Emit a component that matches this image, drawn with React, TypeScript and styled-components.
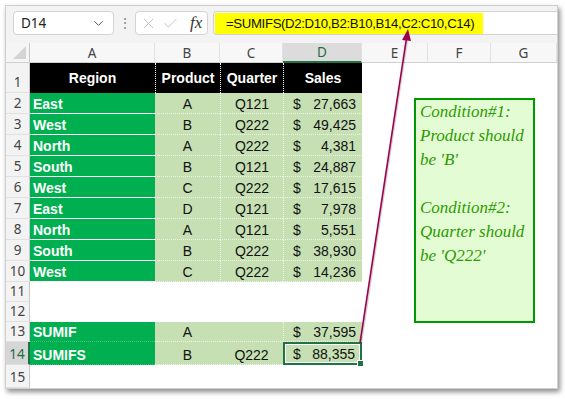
import React from "react";
import styled, { createGlobalStyle } from "styled-components";
import { ChevronDown, X, Check } from "lucide-react";

const GlobalStyle = createGlobalStyle`
  html, body {
    margin: 0;
    padding: 0;
    background: #fff;
  }
  body {
    width: 565px;
    height: 399px;
    overflow: hidden;
    font-family: "Liberation Sans", Arial, sans-serif;
  }
`;

const Page = styled.div`
  position: relative;
  width: 565px;
  height: 399px;
  padding: 5px 0 0 5px;
  box-sizing: border-box;
`;

const Window = styled.div`
  width: 553px;
  height: 384px;
  box-sizing: border-box;
  border: 1px solid #cfcfcf;
  background: #fff;
  box-shadow: 2px 3px 5px rgba(0, 0, 0, 0.45);
  display: flex;
  flex-direction: column;
  overflow: hidden;
`;

/* ---------- formula bar ---------- */

const Toolbar = styled.div`
  height: 37px;
  flex-shrink: 0;
  box-sizing: border-box;
  padding: 5px 0 0 7px;
  background: #f3f3f3;
  display: flex;
  align-items: flex-start;
`;

const RoundBox = styled.div`
  height: 24px;
  box-sizing: border-box;
  border: 1px solid #d3d3d3;
  border-radius: 4px;
  background: #fff;
  display: flex;
  align-items: center;
`;

const NameBox = styled(RoundBox)`
  width: 101px;
  justify-content: space-between;
  padding: 0 7px 0 7px;
  font-family: "Noto Sans", "Open Sans", sans-serif;
  font-size: 13.5px;
  color: #222;
`;

const Dots = styled.span`
  width: 21px;
  text-align: center;
  line-height: 24px;
  font-size: 14px;
  color: #8a8a8a;
`;

const FxBox = styled(RoundBox)`
  width: 73px;
  padding: 0 4px 0 4px;
  gap: 5px;
`;

const Fx = styled.span`
  margin-left: 6px;
  font-family: "Liberation Serif", "Times New Roman", serif;
  font-style: italic;
  font-size: 17px;
  color: #333;
`;

const FormulaBox = styled(RoundBox)`
  flex: 1;
  margin-left: 5px;
  border-right: none;
  border-radius: 4px 0 0 4px;
  padding-left: 1px;
`;

const Highlight = styled.div`
  width: 268px;
  height: 21px;
  box-sizing: border-box;
  padding-left: 11px;
  background: #ffff00;
  font-size: 13.2px;
  letter-spacing: -0.35px;
  line-height: 21px;
  color: #111;
  white-space: nowrap;
`;

/* ---------- sheet ---------- */

const Sheet = styled.div`
  flex: 1;
  display: grid;
  grid-template-columns: 24px 125px 65px 63px 79px 66px 63px 1fr;
  grid-template-rows: 20px 30px repeat(9, 21px) 20px 20px 20px 23px 1fr;
`;

const Corner = styled.div`
  background: #f5f5f5;
  border-right: 1px solid #c8c8c8;
  border-bottom: 1px solid #d0d0d0;
  box-sizing: border-box;
  position: relative;
  &::after {
    content: "";
    position: absolute;
    right: 3px;
    bottom: 3px;
    width: 13px;
    height: 13px;
    background: #d4d4d4;
    clip-path: polygon(100% 0, 100% 100%, 0 100%);
  }
`;

const ColHead = styled.div<{ $active?: boolean }>`
  box-sizing: border-box;
  display: flex;
  align-items: center;
  justify-content: center;
  font-family: "Noto Sans", "Open Sans", sans-serif;
  font-size: 13.5px;
  color: ${({ $active }) => ($active ? "#1e6e42" : "#444")};
  background: ${({ $active }) => ($active ? "#dcdcdc" : "#f7f7f7")};
  border-right: 1px solid #e2e2e2;
  border-bottom: ${({ $active }) =>
    $active ? "2px solid #217346" : "1px solid #d0d0d0"};
`;

const RowHead = styled.div<{ $active?: boolean }>`
  box-sizing: border-box;
  display: flex;
  align-items: flex-end;
  justify-content: center;
  padding-bottom: 2px;
  font-family: "Noto Sans", "Open Sans", sans-serif;
  font-size: 13.5px;
  line-height: 16px;
  color: ${({ $active }) => ($active ? "#1e6e42" : "#444")};
  background: ${({ $active }) => ($active ? "#d6d6d6" : "#f3f3f3")};
  border-bottom: 1px solid #e1e1e1;
  border-right: ${({ $active }) =>
    $active ? "2px solid #217346" : "1px solid #c8c8c8"};
`;

type Kind = "title" | "region" | "light" | "blank";

const Cell = styled.div<{
  $kind: Kind;
  $align?: "left" | "center";
  $sep?: boolean;
  $flat?: boolean;
}>`
  box-sizing: border-box;
  display: flex;
  align-items: ${({ $kind }) => ($kind === "title" ? "center" : "flex-end")};
  justify-content: ${({ $align }) =>
    $align === "left" ? "flex-start" : "center"};
  padding: 0 3px;
  font-size: 14px;
  line-height: 17px;
  white-space: nowrap;
  font-weight: ${({ $kind }) =>
    $kind === "title" || $kind === "region" ? "bold" : "normal"};
  color: ${({ $kind }) =>
    $kind === "title" || $kind === "region" ? "#fff" : "#111"};
  background: ${({ $kind }) =>
    $kind === "title"
      ? "#000"
      : $kind === "region"
      ? "#00b050"
      : $kind === "light"
      ? "#c6e0b4"
      : "#fff"};
  border-left: ${({ $sep, $kind }) =>
    !$sep
      ? "none"
      : $kind === "title"
      ? "1px dotted #fff"
      : "1px dotted #eef6e8"};
  border-bottom: ${({ $kind, $flat }) =>
    $kind === "blank" || $kind === "title"
      ? "none"
      : $flat
      ? "1px dotted #3fc479"
      : $kind === "region"
      ? "1px solid #fff"
      : "1px dotted #eef6e8"};
`;

const Money = styled(Cell)`
  justify-content: space-between;
  padding: 0 6px 0 9px;
`;

const Selected = styled(Money)`
  position: relative;
  border: 2px solid #217346;
  box-shadow: inset 0 0 0 1px #fff;
  padding: 0 5px 0 8px;
  &::after {
    content: "";
    position: absolute;
    right: -4px;
    bottom: -4px;
    width: 5px;
    height: 5px;
    background: #217346;
    border: 1px solid #fff;
    z-index: 2;
  }
`;

/* ---------- overlays ---------- */

const Note = styled.div`
  position: absolute;
  left: 414px;
  top: 98px;
  width: 121px;
  height: 225px;
  box-sizing: border-box;
  border: 2px solid #009a00;
  background: #e4fcd3;
  padding: 0 0 0 4px;
  font-family: "Liberation Serif", "Times New Roman", serif;
  font-style: italic;
  font-size: 17px;
  line-height: 24px;
  color: #2b9a00;
`;

const Line = styled.div`
  min-height: 24px;
  white-space: nowrap;
`;

const ArrowLayer = styled.svg`
  position: absolute;
  left: 0;
  top: 0;
  pointer-events: none;
`;

const columns = ["A", "B", "C", "D", "E", "F", "G"];

const data = [
  ["East", "A", "Q121", "27,663"],
  ["West", "B", "Q222", "49,425"],
  ["North", "A", "Q222", "4,381"],
  ["South", "B", "Q121", "24,887"],
  ["West", "C", "Q222", "17,615"],
  ["East", "D", "Q121", "7,978"],
  ["North", "A", "Q121", "5,551"],
  ["South", "B", "Q222", "38,930"],
  ["West", "C", "Q222", "14,236"],
];

const Blanks = ({ n }: { n: number }) => (
  <>
    {Array.from({ length: n }).map((_, i) => (
      <Cell key={i} $kind="blank" />
    ))}
  </>
);

const Dollar = ({ value }: { value: string }) => (
  <>
    <span>$</span>
    <span>{value}</span>
  </>
);

export default function App() {
  return (
    <Page>
      <GlobalStyle />
      <Window>
        <Toolbar>
          <NameBox>
            <span>D14</span>
            <ChevronDown size={15} color="#555" strokeWidth={1.6} />
          </NameBox>
          <Dots>⋮</Dots>
          <FxBox>
            <X size={17} color="#b8b8b8" strokeWidth={1.2} />
            <Check size={17} color="#b8b8b8" strokeWidth={1.2} />
            <Fx>fx</Fx>
          </FxBox>
          <FormulaBox>
            <Highlight>=SUMIFS(D2:D10,B2:B10,B14,C2:C10,C14)</Highlight>
          </FormulaBox>
        </Toolbar>

        <Sheet>
          <Corner />
          {columns.map((c) => (
            <ColHead key={c} $active={c === "D"}>
              {c}
            </ColHead>
          ))}

          <RowHead>1</RowHead>
          <Cell $kind="title">Region</Cell>
          <Cell $kind="title" $sep>Product</Cell>
          <Cell $kind="title" $sep>Quarter</Cell>
          <Cell $kind="title" $sep>Sales</Cell>
          <Blanks n={3} />

          {data.map((r, i) => (
            <React.Fragment key={i}>
              <RowHead>{i + 2}</RowHead>
              <Cell $kind="region" $align="left">{r[0]}</Cell>
              <Cell $kind="light">{r[1]}</Cell>
              <Cell $kind="light" $sep>{r[2]}</Cell>
              <Money $kind="light" $sep>
                <Dollar value={r[3]} />
              </Money>
              <Blanks n={3} />
            </React.Fragment>
          ))}

          <RowHead>11</RowHead>
          <Blanks n={7} />
          <RowHead>12</RowHead>
          <Blanks n={7} />

          <RowHead>13</RowHead>
          <Cell $kind="region" $align="left" $flat>SUMIF</Cell>
          <Cell $kind="light">A</Cell>
          <Cell $kind="light" />
          <Money $kind="light" $sep>
            <Dollar value="37,595" />
          </Money>
          <Blanks n={3} />

          <RowHead $active>14</RowHead>
          <Cell $kind="region" $align="left" $flat>SUMIFS</Cell>
          <Cell $kind="light">B</Cell>
          <Cell $kind="light">Q222</Cell>
          <Selected $kind="light">
            <Dollar value="88,355" />
          </Selected>
          <Blanks n={3} />

          <RowHead>15</RowHead>
          <Blanks n={7} />
        </Sheet>
      </Window>

      <Note>
        <Line>Condition#1:</Line>
        <Line>Product should</Line>
        <Line>be 'B'</Line>
        <Line />
        <Line>Condition#2:</Line>
        <Line>Quarter should</Line>
        <Line>be 'Q222'</Line>
      </Note>

      <ArrowLayer width={565} height={399} viewBox="0 0 565 399">
        <line
          x1={361}
          y1={344}
          x2={407}
          y2={41}
          stroke="rgba(0,0,0,0.18)"
          strokeWidth={2}
        />
        <line
          x1={360}
          y1={343}
          x2={406.5}
          y2={38}
          stroke="#9e0050"
          strokeWidth={1.6}
        />
        <polygon points="408,29 411,41 402,40" fill="#9e0050" />
      </ArrowLayer>
    </Page>
  );
}
